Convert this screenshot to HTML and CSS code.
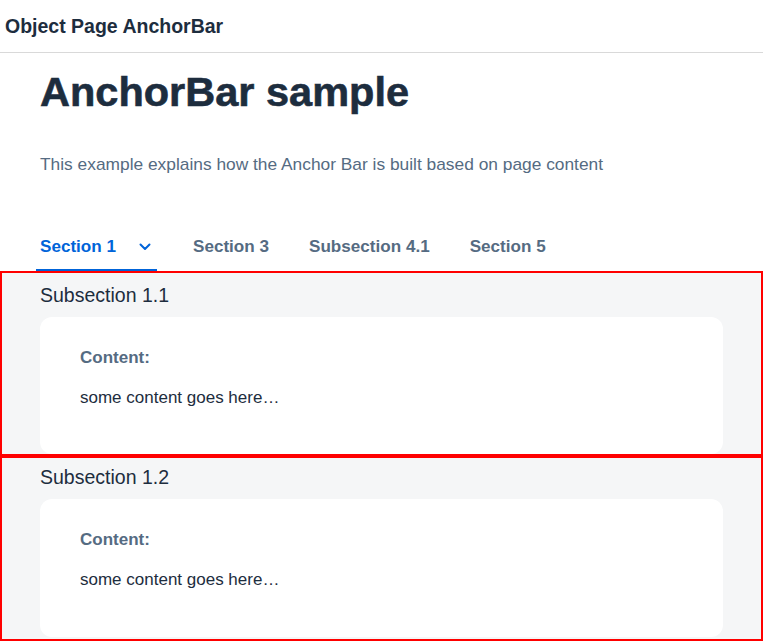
FILE: index.html
```html
<!DOCTYPE html>
<html lang="en">
<head>
<meta charset="utf-8">
<title>Object Page AnchorBar</title>
<link rel="stylesheet" href="styles.css">
</head>
<body>
<header class="app-header">Object Page AnchorBar</header>
<main class="page">
  <div class="page-head">
    <h1 class="page-title">AnchorBar sample</h1>
    <p class="page-subtitle">This example explains how the Anchor Bar is built based on page content</p>
    <nav class="anchor-bar">
      <div class="tab tab--active">
        <span class="tab-label">Section 1</span>
        <span class="tab-menu">
          <svg width="12" height="8" viewBox="0 0 12 8" aria-hidden="true"><path d="M1.5 1.5 L6 6 L10.5 1.5" fill="none" stroke="#0064d9" stroke-width="2" stroke-linecap="round" stroke-linejoin="round"/></svg>
        </span>
      </div>
      <div class="tab"><span class="tab-label">Section 3</span></div>
      <div class="tab"><span class="tab-label">Subsection 4.1</span></div>
      <div class="tab"><span class="tab-label">Section 5</span></div>
    </nav>
  </div>
  <section class="subsection">
    <h2 class="subsection-title">Subsection 1.1</h2>
    <div class="card">
      <div class="card-label">Content:</div>
      <div class="card-text">some content goes here…</div>
    </div>
  </section>
  <section class="subsection subsection--next">
    <h2 class="subsection-title">Subsection 1.2</h2>
    <div class="card card--tall">
      <div class="card-label">Content:</div>
      <div class="card-text">some content goes here…</div>
    </div>
  </section>
</main>
</body>
</html>
```
FILE: styles.css
```css
* { box-sizing: border-box; }
html, body { margin: 0; padding: 0; background: #ffffff; }
body {
  font-family: "Liberation Sans", Arial, sans-serif;
  color: #1d2d3e;
  width: 763px;
  overflow: hidden;
}
.app-header {
  height: 53px;
  border-bottom: 1px solid #d9d9d9;
  padding-left: 5px;
  font-size: 19.5px;
  font-weight: 700;
  line-height: 52px;
  color: #1d2d3e;
}
.page-head {
  padding-left: 40px;
}
.page-title {
  margin: 14px 0 0;
  font-size: 41.5px;
  line-height: 50px;
  font-weight: 700;
  color: #1d2d3e;
  -webkit-text-stroke: 0.6px #1d2d3e;
}
.page-subtitle {
  margin: 37px 0 0;
  font-size: 17.35px;
  line-height: 20px;
  color: #556b82;
}
.anchor-bar {
  display: flex;
  gap: 32px;
  margin: 51px 0 0 -4px;
}
.tab {
  display: flex;
  align-items: center;
  padding: 12px 4px 12px;
  border-bottom: 2px solid transparent;
  font-size: 17.1px;
  line-height: 20px;
  font-weight: 700;
  color: #556b82;
}
.tab--active {
  color: #0064d9;
  border-bottom-color: #0064d9;
  padding-right: 5px;
}
.tab-menu {
  display: flex;
  align-items: center;
  justify-content: center;
  width: 14px;
  height: 20px;
  margin-left: 22px;
}
.subsection {
  height: 185px;
  border: 2px solid #ff0000;
  background: #f5f6f7;
  padding: 10px 38px 0;
  overflow: hidden;
}
.subsection--next {
  padding-top: 7px;
}
.subsection-title {
  margin: 0;
  font-size: 19.5px;
  line-height: 24px;
  font-weight: 400;
  color: #1d2d3e;
}
.card {
  margin-top: 10px;
  height: 137px;
  background: #ffffff;
  border-radius: 12px;
  padding: 31px 40px 0;
}
.card--tall {
  height: 138px;
}
.card-label {
  font-size: 17px;
  line-height: 20px;
  font-weight: 700;
  color: #556b82;
}
.card-text {
  margin-top: 20px;
  font-size: 17px;
  line-height: 20px;
  color: #1d2d3e;
}
```
